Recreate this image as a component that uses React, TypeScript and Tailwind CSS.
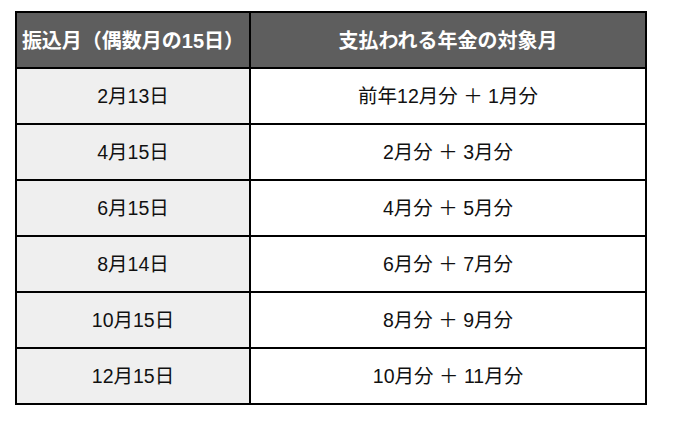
import React from "react";

const rows: [string, string][] = [
  ["2月13日", "前年12月分 ＋ 1月分"],
  ["4月15日", "2月分 ＋ 3月分"],
  ["6月15日", "4月分 ＋ 5月分"],
  ["8月14日", "6月分 ＋ 7月分"],
  ["10月15日", "8月分 ＋ 9月分"],
  ["12月15日", "10月分 ＋ 11月分"],
];

const font = {
  fontFamily: '"Liberation Sans", "Noto Sans CJK JP", sans-serif',
};

export default function App() {
  return (
    <div className="w-[673px] h-[428px] bg-white pt-[11px] pl-[15px]" style={font}>
      <div className="w-[632px] border-2 border-black flex flex-col">
        <div className="flex h-[54px] bg-[#5e5e5e] text-white font-bold text-[20px]">
          <div className="w-[234px] border-r-2 border-black flex items-center justify-center pt-[1px]">
            振込月（偶数月の15日）
          </div>
          <div className="flex-1 flex items-center justify-center pt-[1px]">支払われる年金の対象月</div>
        </div>
        {rows.map(([a, b]) => (
          <div key={a} className="flex h-[56px] border-t-2 border-black text-[19.5px] text-[#111]">
            <div className="w-[234px] border-r-2 border-black bg-[#efefef] flex items-center justify-center pt-[2px]">
              {a}
            </div>
            <div className="flex-1 bg-white flex items-center justify-center pt-[2px]">{b}</div>
          </div>
        ))}
      </div>
    </div>
  );
}
